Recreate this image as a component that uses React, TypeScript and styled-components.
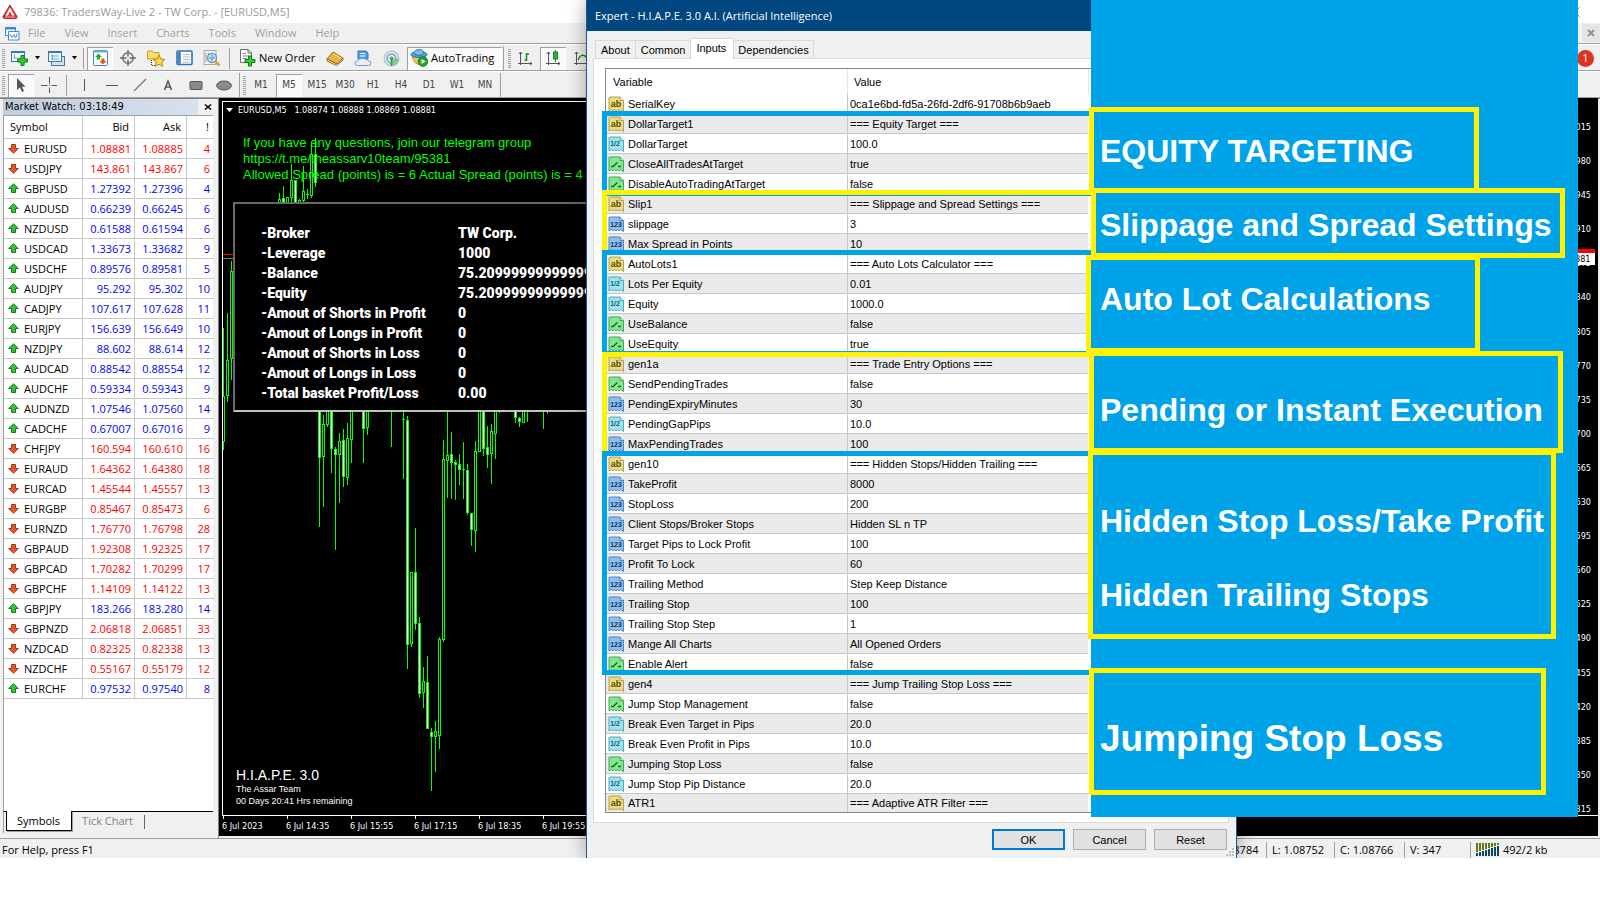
import React from "react";
import styled, { createGlobalStyle, css } from "styled-components";

const UI = `"Open Sans", "Liberation Sans", sans-serif`;
const TAHOMA = `"DejaVu Sans Condensed", "DejaVu Sans", sans-serif`;
const ARIAL = `"Liberation Sans", Arial, sans-serif`;
const HEAVY = `Roboto, "Liberation Sans", sans-serif`;

const SHEET = "#00a2e8";
const MARKER = "#fff200";

const GlobalStyle = createGlobalStyle`
  *, *::before, *::after { box-sizing: border-box; }
  body { margin: 0; background: #fff; overflow-x: hidden; }
  button { font: inherit; color: inherit; background: none; border: 0; padding: 0; margin: 0; }
  svg { display: block; flex: none; }
  table { border-collapse: separate; border-spacing: 0; table-layout: fixed; }
  th, td { padding: 0; font-weight: 400; text-align: left; white-space: nowrap; overflow: hidden; }
`;

const Desktop = styled.div`
  display: grid;
  grid-template-columns: 586px 505px 146px minmax(0, 1fr) 22px;
  align-items: start;
  overflow: hidden;
  font-family: ${UI};
  font-size: 11px;
  line-height: 16px;
  color: #000;
`;

/* ---------- terminal window ---------- */

const Terminal = styled.div`
  grid-area: 1 / 1 / 2 / -1;
  align-self: stretch;
  min-width: 0;
  display: flex;
  flex-direction: column;
  background: #f0f0f0;
`;

const TitleBar = styled.header`
  height: 23px;
  display: flex;
  align-items: center;
  gap: 6px;
  padding: 0 20px 0 2px;
  background: #fff;
  color: #999;
`;

const TitleText = styled.h1`
  margin: 0;
  flex: 1;
  font-size: 11px;
  font-weight: 400;
`;

const MenuBar = styled.nav`
  height: 21px;
  display: flex;
  align-items: center;
  gap: 18px;
  padding-left: 5px;
  border-bottom: 1px solid #a0a0a0;
  color: #a0a0a0;
`;

const MenuButtons = styled.div`
  flex: 1;
  display: flex;
  gap: 19px;
  margin-left: -10px;
`;

const CloseChild = styled.button`
  width: 18px;
  height: 18px;
  display: grid;
  place-items: center;
  background: #e5e5e5;
`;

const ToolRow = styled.div`
  height: 27px;
  display: flex;
  align-items: center;
  padding: 2px 6px 0 0;
  border-bottom: 1px solid #a0a0a0;
  box-shadow: inset 0 1px #fff;
`;

const Grip = styled.span<{ $w: number }>`
  width: ${(p) => p.$w}px;
  height: 19px;
  padding-left: 2px;
  &::before {
    content: "";
    display: block;
    width: 3px;
    height: 19px;
    background: repeating-linear-gradient(#a0a0a0 0 1px, #f0f0f0 1px 2px);
  }
`;

const Divider = styled.span<{ $l?: number; $r?: number; $full?: boolean }>`
  width: 1px;
  height: ${(p) => (p.$full ? 24 : 21)}px;
  margin: 0 ${(p) => p.$r ?? 2}px 0 ${(p) => p.$l ?? 0}px;
  background: #a0a0a0;
`;

const pressedLook = css`
  background: #f9f9f9;
  box-shadow: inset 1px 1px #a0a0a0, inset -1px -1px #fff;
`;

const Tool = styled.button<{ $on?: boolean }>`
  width: 26px;
  height: 23px;
  margin: 0 1px;
  flex: none;
  display: grid;
  place-items: center;
  ${(p) => p.$on && pressedLook}
`;

const DropTool = styled.button`
  width: 37px;
  height: 23px;
  padding-left: 2px;
  flex: none;
  display: flex;
  align-items: center;
  gap: 6px;
`;

const WideTool = styled.button<{ $on?: boolean; $w: number; $pad: number }>`
  width: ${(p) => p.$w}px;
  height: 23px;
  padding-left: ${(p) => p.$pad}px;
  margin-left: ${(p) => (p.$on ? 2 : 0)}px;
  flex: none;
  display: flex;
  align-items: center;
  gap: 3px;
  white-space: nowrap;
  ${(p) => p.$on && pressedLook}
`;

const Period = styled(Tool)`
  font-family: ${TAHOMA};
  font-size: 10px;
  color: #444;
`;

const Notice = styled.button`
  width: 17px;
  height: 17px;
  margin-left: auto;
  border-radius: 50%;
  background: #dc3220;
  color: #fff;
  line-height: 16px;
`;

const Workspace = styled.main`
  flex: 1;
  min-height: 0;
  display: flex;
  padding-right: 2px;
  border-bottom: 1px solid #a0a0a0;
  box-shadow: inset 0 1px #808080;
`;

/* ---------- market watch ---------- */

const Watch = styled.section`
  width: 219px;
  flex: none;
  display: flex;
  flex-direction: column;
  padding: 1px 5px 5px 3px;
  border-right: 1px solid #808080;
`;

const WatchTitle = styled.div`
  height: 16px;
  display: flex;
  align-items: center;
  justify-content: space-between;
  padding: 0 1px 0 2px;
  background: linear-gradient(90deg, #bfcddb, #d7e2ee 93%, #f0f0f0 93%);
  font-family: ${TAHOMA};
`;

const WatchList = styled.div`
  flex: 1;
  border-left: 1px solid #a0a0a0;
  border-top: 1px solid #a0a0a0;
  background: #fff;
`;

const Quotes = styled.table`
  width: 210px;
`;

const QuoteHead = styled.th<{ $num?: boolean }>`
  height: 23px;
  border-bottom: 1px solid #c8c8c8;
  border-right: 1px solid #c8c8c8;
  && { text-align: ${(p) => (p.$num ? "right" : "left")}; }
  padding: 0 5px 0 6px;
  &:last-child { border-right: 0; }
`;

const Quote = styled.td<{ $tone?: string }>`
  height: 20px;
  border-bottom: 1px solid #c8c8c8;
  border-right: 1px solid #c8c8c8;
  padding-right: ${(p) => (p.$tone ? 3 : 0)}px;
  && { text-align: ${(p) => (p.$tone ? "right" : "left")}; }
  color: ${(p) => p.$tone ?? "#000"};
  line-height: 18px;
  &:last-child { border-right: 0; padding-right: 4px; }
`;

const SymbolName = styled.span`
  display: flex;
  align-items: center;
  gap: 5px;
  padding-left: 4px;
`;

const WatchTabs = styled.div`
  height: 22px;
  display: flex;
  align-items: start;
  border-top: 1px solid #000;
  border-left: 1px solid #a0a0a0;
`;

const WatchTab = styled.button<{ $on?: boolean }>`
  height: 20px;
  padding: 0 11px 0 10px;
  margin: -1px 0 0 ${(p) => (p.$on ? 2 : 0)}px;
  color: ${(p) => (p.$on ? "#000" : "#808080")};
  ${(p) =>
    p.$on &&
    css`
      background: #fff;
      border: solid #000;
      border-width: 0 1px 1px;
      box-shadow: 1px 1px #a0a0a0;
    `}
`;

/* ---------- chart ---------- */

const Chart = styled.section`
  flex: 1;
  min-width: 0;
  display: grid;
  grid-template: minmax(0, 1fr) 21px / minmax(0, 1fr) auto;
  padding: 3px 0 0 3px;
  margin-bottom: 2px;
  background: #000;
  color: #fff;
  font-family: ${TAHOMA};
  font-size: 9px;
`;

const Plot = styled.div`
  display: grid;
  min-height: 0;
  border: solid #fff;
  border-width: 1px 0 0 1px;
  & > * { grid-area: 1 / 1; }
`;

const PlotText = styled.div`
  display: flex;
  flex-direction: column;
  min-width: 0;
`;

const ChartTitle = styled.div`
  height: 16px;
  display: flex;
  align-items: center;
  gap: 5px;
  padding-left: 3px;
  white-space: pre;
`;

const Comment = styled.p`
  margin: 17px 0 19px 20px;
  font-family: ${ARIAL};
  font-size: 13px;
  line-height: 16px;
  color: #00ff00;
`;

const AccountPanel = styled.dl`
  width: 380px;
  margin: 0 0 0 10px;
  padding: 19px 0 7px 26px;
  display: grid;
  grid-template-columns: 197px 1fr;
  border: solid #696969;
  border-width: 2px 0 2px 2px;
  border-bottom-color: #c0c0c0;
  background: #000;
  font-family: ${HEAVY};
  font-weight: 900;
  font-size: 14px;
  line-height: 20px;
  dt, dd { margin: 0; white-space: nowrap; }
`;

const Brand = styled.div`
  margin: auto 0 8px 13px;
  font-family: ${ARIAL};
  font-size: 9px;
  line-height: 12px;
  strong { display: block; font-weight: 400; font-size: 14px; line-height: 16px; }
`;

const PriceAxis = styled.ol`
  position: relative;
  margin: 0;
  padding: 20px 7px 0 6px;
  list-style: none;
  display: flex;
  flex-direction: column;
  justify-content: space-between;
  line-height: 12px;
`;

const PriceTag = styled.li<{ $ask?: boolean }>`
  position: absolute;
  right: 3px;
  top: ${(p) => (p.$ask ? 148 : 152)}px;
  width: 42px;
  height: 12px;
  padding: 0 4px;
  background: ${(p) => (p.$ask ? "#f00" : "#fff")};
  color: #000;
`;

const TimeAxis = styled.ol`
  grid-column: 1 / -1;
  margin: 0;
  padding: 0;
  list-style: none;
  display: flex;
  border-top: 1px solid #fff;
`;

const TimeMark = styled.li`
  width: 64px;
  flex: none;
  line-height: 14px;
  white-space: nowrap;
  &::before {
    content: "";
    display: block;
    width: 1px;
    height: 3px;
    margin-left: 1px;
    background: #fff;
  }
`;

/* ---------- status bar ---------- */

const StatusBar = styled.footer`
  height: 19px;
  display: flex;
  align-items: center;
  padding: 2px 0 0 2px;
`;

const StatusGroup = styled.div`
  display: flex;
  margin-left: auto;
`;

const StatusCell = styled.span<{ $w: number }>`
  width: ${(p) => p.$w}px;
  display: flex;
  align-items: center;
  gap: 3px;
  padding-left: 5px;
  border-left: 1px solid #a0a0a0;
  white-space: nowrap;
`;

/* ---------- expert dialog ---------- */

const Dialog = styled.section`
  grid-area: 1 / 2 / 2 / 4;
  z-index: 1;
  display: flex;
  flex-direction: column;
  border-left: 1px solid #1a5a90;
  border-right: 1px solid #1a5a90;
  background: #f0f0f0;
  box-shadow: 0 0 18px rgba(0, 0, 0, 0.35);
  font-family: ${ARIAL};
  clip-path: inset(0 -20px 0 -20px);
`;

const DialogTitle = styled.h2`
  margin: 0;
  height: 31px;
  padding-left: 8px;
  background: #004680;
  color: #fff;
  font-family: ${UI};
  font-size: 11px;
  font-weight: 400;
  line-height: 32px;
`;

const Tabs = styled.div`
  display: flex;
  align-items: flex-end;
  padding: 7px 0 0 8px;
`;

const Tab = styled.button<{ $on?: boolean }>`
  height: ${(p) => (p.$on ? 21 : 18)}px;
  margin: 0 -1px ${(p) => (p.$on ? -1 : 0)}px 0;
  position: relative;
  border: 1px solid #d9d9d9;
  border-bottom: 0;
  background: ${(p) => (p.$on ? "#fff" : "#f0f0f0")};
  padding: 0 ${(p) => (p.$on ? "7px 2px 5px" : "5px")};
  z-index: ${(p) => (p.$on ? 1 : 0)};
  &:last-child { padding: 0 4px; }
`;

const TabPage = styled.div`
  margin: 0 7px 0 6px;
  padding: 9px 9px 9px 11px;
  border: 1px solid #d9d9d9;
  background: #fff;
`;

const ListView = styled.div`
  position: relative;
  border: 1px solid #828790;
`;

const Params = styled.table`
  width: 483px;
`;

const ParamHead = styled.th`
  height: 25px;
  padding-left: 7px;
  border-right: 1px solid #e5e5e5;
  & + & { padding-left: 6px; }
`;

const Param = styled.td`
  height: 20px;
  line-height: 18px;
  padding: 1px 0 0 2px;
  border-bottom: 1px solid #c8c8c8;
  border-right: 1px solid #c8c8c8;
  &:last-child { border-right-color: #fff; }
`;

const ParamRow = styled.tr`
  &:nth-child(even) { background: #eaeaea; }
  &:last-child ${Param} { height: 18px; line-height: 17px; border-bottom: 0; }
`;

const ParamName = styled.span`
  display: flex;
  align-items: center;
  gap: 3px;
`;

const Frames = styled.div`
  position: absolute;
  top: 42px;
  left: -4px;
  width: 496px;
  pointer-events: none;
`;

const Frame = styled.div<{ $h: number; $lap: number; $color: string }>`
  height: ${(p) => p.$h}px;
  margin-top: ${(p) => -p.$lap}px;
  border: 5px solid ${(p) => p.$color};
  position: relative;
`;

const Actions = styled.div`
  display: flex;
  justify-content: flex-end;
  gap: 8px;
  padding: 6px 9px 8px;
`;

const Action = styled.button<{ $primary?: boolean }>`
  width: 73px;
  height: 21px;
  background: #e1e1e1;
  border: ${(p) => (p.$primary ? "2px solid #0078d7" : "1px solid #adadad")};
`;

const ResizeGrip = styled.svg`
  position: absolute;
  right: 2px;
  bottom: 2px;
`;

const ActionBar = styled.div`
  position: relative;
`;

/* ---------- callouts ---------- */

const Sheet = styled.aside`
  grid-area: 1 / 3 / 2 / 5;
  z-index: 2;
  min-height: 817px;
  padding: 107px 0 22px;
  background: ${SHEET};
  font-family: ${ARIAL};
  font-weight: 700;
  font-size: 32px;
  line-height: 37px;
  color: #fff;
`;

const Callout = styled.div<{ $w: number; $h: number; $gap: number; $pad: number; $out?: number }>`
  position: relative;
  width: ${(p) => p.$w}px;
  height: ${(p) => p.$h}px;
  margin: ${(p) => p.$gap}px 0 0 -${(p) => p.$out ?? 2}px;
  padding: ${(p) => p.$pad}px 0 0 ${(p) => 4 + (p.$out ?? 2)}px;
  border: 5px solid ${MARKER};
  white-space: nowrap;
`;

const CalloutText = styled.p<{ $big?: boolean }>`
  margin: 0 0 37px;
  font-size: ${(p) => (p.$big ? 37 : 32)}px;
  line-height: ${(p) => (p.$big ? 43 : 37)}px;
`;

/* ---------- data ---------- */

const quotes: [string, string, string, number, 0 | 1][] = [
  ["EURUSD", "1.08881", "1.08885", 4, 0],
  ["USDJPY", "143.861", "143.867", 6, 0],
  ["GBPUSD", "1.27392", "1.27396", 4, 1],
  ["AUDUSD", "0.66239", "0.66245", 6, 1],
  ["NZDUSD", "0.61588", "0.61594", 6, 1],
  ["USDCAD", "1.33673", "1.33682", 9, 1],
  ["USDCHF", "0.89576", "0.89581", 5, 1],
  ["AUDJPY", "95.292", "95.302", 10, 1],
  ["CADJPY", "107.617", "107.628", 11, 1],
  ["EURJPY", "156.639", "156.649", 10, 1],
  ["NZDJPY", "88.602", "88.614", 12, 1],
  ["AUDCAD", "0.88542", "0.88554", 12, 1],
  ["AUDCHF", "0.59334", "0.59343", 9, 1],
  ["AUDNZD", "1.07546", "1.07560", 14, 1],
  ["CADCHF", "0.67007", "0.67016", 9, 1],
  ["CHFJPY", "160.594", "160.610", 16, 0],
  ["EURAUD", "1.64362", "1.64380", 18, 0],
  ["EURCAD", "1.45544", "1.45557", 13, 0],
  ["EURGBP", "0.85467", "0.85473", 6, 0],
  ["EURNZD", "1.76770", "1.76798", 28, 0],
  ["GBPAUD", "1.92308", "1.92325", 17, 0],
  ["GBPCAD", "1.70282", "1.70299", 17, 0],
  ["GBPCHF", "1.14109", "1.14122", 13, 0],
  ["GBPJPY", "183.266", "183.280", 14, 1],
  ["GBPNZD", "2.06818", "2.06851", 33, 0],
  ["NZDCAD", "0.82325", "0.82338", 13, 0],
  ["NZDCHF", "0.55167", "0.55179", 12, 0],
  ["EURCHF", "0.97532", "0.97540", 8, 1],
];

type Kind = "s" | "d" | "b" | "i";

const params: [Kind, string, string][] = [
  ["s", "SerialKey", "0ca1e6bd-fd5a-26fd-2df6-91708b6b9aeb"],
  ["s", "DollarTarget1", "=== Equity Target ==="],
  ["d", "DollarTarget", "100.0"],
  ["b", "CloseAllTradesAtTarget", "true"],
  ["b", "DisableAutoTradingAtTarget", "false"],
  ["s", "Slip1", "=== Slippage and Spread Settings ==="],
  ["i", "slippage", "3"],
  ["i", "Max Spread in Points", "10"],
  ["s", "AutoLots1", "=== Auto Lots Calculator ==="],
  ["d", "Lots Per Equity", "0.01"],
  ["d", "Equity", "1000.0"],
  ["b", "UseBalance", "false"],
  ["b", "UseEquity", "true"],
  ["s", "gen1a", "=== Trade Entry Options ==="],
  ["b", "SendPendingTrades", "false"],
  ["i", "PendingExpiryMinutes", "30"],
  ["d", "PendingGapPips", "10.0"],
  ["i", "MaxPendingTrades", "100"],
  ["s", "gen10", "=== Hidden Stops/Hidden Trailing ==="],
  ["i", "TakeProfit", "8000"],
  ["i", "StopLoss", "200"],
  ["i", "Client Stops/Broker Stops", "Hidden SL n TP"],
  ["i", "Target Pips to Lock Profit", "100"],
  ["i", "Profit To Lock", "60"],
  ["i", "Trailing Method", "Step Keep Distance"],
  ["i", "Trailing Stop", "100"],
  ["i", "Trailing Stop Step", "1"],
  ["i", "Mange All Charts", "All Opened Orders"],
  ["b", "Enable Alert", "false"],
  ["s", "gen4", "=== Jump Trailing Stop Loss ==="],
  ["b", "Jump Stop Management", "false"],
  ["d", "Break Even Target in Pips", "20.0"],
  ["d", "Break Even Profit in Pips", "10.0"],
  ["b", "Jumping Stop Loss", "false"],
  ["d", "Jump Stop Pip Distance", "20.0"],
  ["s", "ATR1", "=== Adaptive ATR Filter ==="],
];

const account: [string, string][] = [
  ["-Broker", "TW Corp."],
  ["-Leverage", "1000"],
  ["-Balance", "75.20999999999999"],
  ["-Equity", "75.20999999999999"],
  ["-Amout of Shorts in Profit", "0"],
  ["-Amout of Longs in Profit", "0"],
  ["-Amout of Shorts in Loss", "0"],
  ["-Amout of Longs in Loss", "0"],
  ["-Total basket Profit/Loss", "0.00"],
];

/* x, high, low, body top, body bottom, 1 for a falling (filled) candle */
const candles: number[][] = [
  [223, 328, 450, 396, 442, 0], [227, 313, 402, 360, 396, 0], [231, 261, 380, 271, 359, 0],
  [279, 193, 210, 199, 210, 0], [283, 186, 210, 198, 210, 1], [287, 197, 210, 197, 210, 0],
  [291, 164, 202, 180, 198, 0], [295, 180, 210, 180, 210, 1], [299, 199, 210, 200, 210, 0],
  [303, 166, 202, 191, 201, 0], [307, 189, 199, 194, 195, 0], [311, 142, 198, 154, 196, 0],
  [315, 138, 187, 154, 183, 1], [319, 400, 527, 400, 458, 1], [323, 415, 507, 424, 457, 0],
  [327, 400, 427, 400, 425, 0], [331, 400, 473, 400, 449, 1], [335, 447, 550, 449, 455, 1],
  [339, 433, 503, 441, 455, 0], [343, 429, 487, 440, 477, 1], [347, 423, 485, 438, 478, 0],
  [351, 400, 463, 400, 440, 0], [363, 400, 463, 400, 429, 1], [367, 400, 435, 400, 428, 0],
  [391, 400, 447, 405, 406, 0], [403, 400, 479, 419, 420, 0], [407, 416, 669, 420, 645, 1],
  [411, 572, 647, 572, 644, 0], [415, 528, 630, 572, 624, 1], [419, 617, 698, 623, 694, 1],
  [423, 667, 708, 681, 693, 0], [427, 656, 729, 682, 729, 1], [431, 728, 791, 732, 737, 1],
  [435, 721, 772, 731, 737, 0], [439, 637, 749, 639, 736, 0], [443, 440, 642, 459, 640, 0],
  [447, 400, 498, 455, 461, 0], [451, 432, 499, 454, 463, 1], [455, 460, 500, 462, 465, 1],
  [459, 454, 485, 464, 470, 1], [463, 442, 499, 469, 470, 0], [467, 464, 515, 470, 513, 1],
  [471, 513, 546, 513, 530, 1], [475, 441, 552, 451, 531, 0], [479, 400, 452, 400, 452, 0],
  [483, 400, 456, 400, 449, 1], [487, 426, 468, 447, 455, 1], [491, 424, 484, 431, 454, 0],
  [495, 400, 459, 400, 434, 0], [499, 400, 413, 400, 401, 0], [515, 400, 423, 400, 418, 1],
  [519, 417, 427, 418, 422, 1], [523, 400, 423, 400, 423, 0], [527, 400, 422, 400, 401, 0],
  [543, 400, 429, 400, 401, 0], [547, 400, 414, 400, 401, 0],
];

const prices = Array.from({ length: 21 }, (_, i) => ((109015 - i * 35) / 100000).toFixed(5));
const times = ["6 Jul 2023", "6 Jul 14:35", "6 Jul 15:55", "6 Jul 17:15", "6 Jul 18:35", "6 Jul 19:55"];
const menus = ["File", "View", "Insert", "Charts", "Tools", "Window", "Help"];
const periods = ["M1", "M5", "M15", "M30", "H1", "H4", "D1", "W1", "MN"];

/* ---------- icons ---------- */

const Logo = () => (
  <svg width="16" height="16" viewBox="0 0 16 16">
    <path d="M8 1 L15 12.5 Q15.5 14.5 13.5 14.5 H2.500 Q.5 14.500 1 12.500 Z" fill="#d8343c" stroke="#c2262e" strokeLinejoin="round" />
    <path d="M8 3.500 L12.500 11.500 H10 L8 7.500 L6 11.500 H3.500 Z" fill="#fff" />
    <path d="M3 13 H13" stroke="#f3a6a8" strokeWidth="1" />
  </svg>
);

const DocIcon = () => (
  <svg width="15" height="15" viewBox="0 0 15 15" fill="#fff" stroke="#3d86d8">
    <path d="M.5 1.500 H10.500 V9.500 H.5Z" />
    <path d="M.5 2.500 H10.500" strokeWidth="2" />
    <path d="M3.500 5.500 H14 V14 H3.500Z" />
    <path d="M5 8 L7 11.500 L9 8.500 L10.500 12 L12.500 7.500" fill="none" />
  </svg>
);

const Caret = () => (
  <svg width="5" height="4" viewBox="0 0 5 4"><path d="M0 0 H5 L2.500 3.500Z" fill="#000" /></svg>
);

const Plus = ({ x, y }: { x: number; y: number }) => (
  <path
    transform={`translate(${x} ${y})`}
    d="M4 .5 H7 V4 H10.500 V7 H7 V10.500 H4 V7 H.5 V4 H4Z"
    fill="#2fd02f" stroke="#0a7d14" strokeWidth="1"
  />
);

const NewChartIcon = () => (
  <svg width="18" height="17" viewBox="0 0 18 17">
    <rect x=".5" y="1.500" width="13" height="10" fill="#f4faff" stroke="#3b78ad" />
    <path d="M1 2 H13" stroke="#3b78ad" strokeWidth="2" />
    <path d="M3.500 4 V9 M2.500 8 H9" stroke="#7ba4c8" fill="none" />
    <Plus x={6} y={5} />
  </svg>
);

const ProfilesIcon = () => (
  <svg width="18" height="17" viewBox="0 0 18 17">
    <rect x="3.500" y="6.500" width="13" height="9" fill="#cfe3f5" stroke="#3b78ad" />
    <rect x=".5" y="1.500" width="13" height="10" fill="#eef6fd" stroke="#3b78ad" />
    <path d="M1 2 H13" stroke="#3b78ad" strokeWidth="2" />
    <path d="M3 6 H11 M3 9 H11 M4.500 4.500 V10" stroke="#7ba4c8" />
  </svg>
);

const WatchIcon = () => (
  <svg width="17" height="17" viewBox="0 0 17 17">
    <rect x="1.500" y=".5" width="14" height="15" rx="1" fill="#fff" stroke="#3b86c4" />
    <path d="M2 1.500 H15" stroke="#6fb0e4" strokeWidth="2" />
    <path d="M6.500 3.500 L10 7 H8 V9.500 H5 V7 H3Z" fill="#1fae2b" />
    <path d="M11 14.500 L7.500 11 H9.500 V8.500 H12.500 V11 H14.500Z" fill="#e8541c" />
  </svg>
);

const TargetIcon = () => (
  <svg width="16" height="16" viewBox="0 0 16 16" fill="none" stroke="#6a6a6a" strokeWidth="1.400">
    <circle cx="8" cy="8" r="5.200" />
    <path d="M8 0 V6.500 M8 9.500 V16 M0 8 H6.500 M9.500 8 H16" />
  </svg>
);

const NavigatorIcon = () => (
  <svg width="18" height="17" viewBox="0 0 18 17">
    <path d="M.5 2 Q.5 1 1.500 1 H5 L6.500 2.500 H12 V9 H.5Z" fill="#f6dc6a" stroke="#c9a227" />
    <path d="M4.500 10 V15.500 H9" stroke="#333" strokeDasharray="1 1" fill="none" />
    <path d="M12 5 L13.800 9 L17.800 9.400 L14.800 12.200 L15.700 16.300 L12 14.200 L8.300 16.300 L9.200 12.200 L6.200 9.400 L10.200 9Z" fill="#ffd84a" stroke="#b9861a" />
  </svg>
);

const DataIcon = () => (
  <svg width="17" height="16" viewBox="0 0 17 16">
    <rect x="1" y="1" width="15" height="13.500" rx="1" fill="#fff" stroke="#2f73b3" strokeWidth="1.600" />
    <rect x="1.800" y="1.800" width="3" height="12" fill="#3f85c4" />
    <path d="M7 4.500 H14 M7 7 H14 M7 9.500 H14 M7 12 H14" stroke="#a9bfd4" />
  </svg>
);

const TesterIcon = () => (
  <svg width="18" height="17" viewBox="0 0 18 17">
    <rect x="1" y=".5" width="12" height="14" fill="#f2f2f2" stroke="#a8a8a8" />
    <path d="M3 3 V12 M5.500 3 V11" stroke="#999" />
    <circle cx="9" cy="8" r="4.500" fill="#cfe8fb" fillOpacity=".85" stroke="#5f9bcb" strokeWidth="1.300" />
    <path d="M9 5 V11 M7 7 V9 M11 6.500 V9" stroke="#3f7fb5" />
    <path d="M12.500 11.500 L16.500 15.500" stroke="#e0a12c" strokeWidth="2.600" />
  </svg>
);

const OrderIcon = () => (
  <svg width="17" height="18" viewBox="0 0 17 18">
    <path d="M1.500 .5 H9 L12.500 4 V13.500 H1.500Z" fill="#fff" stroke="#6b6b6b" />
    <path d="M9 .5 V4 H12.500" fill="none" stroke="#6b6b6b" />
    <path d="M3.500 4.500 H7 M3.500 7 H10 M3.500 9.500 H8" stroke="#8a8a8a" />
    <Plus x={5.500} y={6.500} />
  </svg>
);

const BookIcon = () => (
  <svg width="18" height="16" viewBox="0 0 18 16">
    <path d="M1 9 L7 2 L17 8 L11 14Z" fill="#e9b44a" stroke="#9c6a14" strokeLinejoin="round" />
    <path d="M1 9 L1 11 L10.500 15.500 L17 10 V8 L11 14Z" fill="#fbe7b0" stroke="#9c6a14" strokeLinejoin="round" />
    <path d="M7 3.500 L15 8" stroke="#ffe28a" />
  </svg>
);

const HostIcon = () => (
  <svg width="18" height="17" viewBox="0 0 18 17">
    <path d="M4 1 H12 L14 3 V9 H4Z" fill="#4ba3e3" stroke="#2674b5" />
    <path d="M6 3.500 H11 M6 6 H11" stroke="#fff" />
    <path d="M3.500 15.500 Q.8 15.500 1 13 Q1.200 11 3.500 11 Q4.500 8 8 8.500 Q10 7.500 12 9.500 Q14 9 14.500 11 Q17 11 17 13.300 Q17 15.500 14.500 15.500Z" fill="#e6eef8" stroke="#7d97b8" />
  </svg>
);

const SignalIcon = () => (
  <svg width="17" height="17" viewBox="0 0 17 17" fill="none">
    <circle cx="8.500" cy="8.500" r="7.200" stroke="#b4c6dc" strokeWidth="1.600" />
    <circle cx="8.500" cy="8.500" r="4.400" stroke="#7da5cc" strokeWidth="1.600" />
    <path d="M8.500 8.500 L9.500 16 A7.500 7.500 0 0 0 16 8.500Z" fill="#7cc47c" fillOpacity=".8" />
    <circle cx="8.500" cy="8.500" r="2" fill="#4caf50" />
    <path d="M8.500 9 V16" stroke="#3e9a42" strokeWidth="1.600" />
  </svg>
);

const AutoIcon = () => (
  <svg width="18" height="18" viewBox="0 0 18 18">
    <path d="M2 8 L16 8 L12 14.500 Q8 17 5 13.500Z" fill="#f3c846" stroke="#bd9120" />
    <ellipse cx="9" cy="5.500" rx="8" ry="3" fill="#4f9fd6" stroke="#2b76ab" />
    <ellipse cx="9" cy="3.500" rx="4.500" ry="2.800" fill="#7cc0ea" stroke="#2b76ab" />
    <circle cx="13" cy="12.500" r="4.800" fill="#21a82d" stroke="#11801b" />
    <path d="M11.500 10 L15.500 12.500 L11.500 15Z" fill="#fff" />
  </svg>
);

const Axes = () => <path d="M2.500 2 V15 M0 13.500 H14 M.8 4 L2.500 2 L4.200 4 M12 12 L14 13.500 L12 15" stroke="#555" fill="none" />;
const BarsIcon = () => (
  <svg width="15" height="16" viewBox="0 0 15 16"><Axes /><path d="M8.500 3 V11 M6.500 10 H8.500 M8.500 4 H11" stroke="#178a2a" strokeWidth="1.500" fill="none" /></svg>
);
const CandleIcon = () => (
  <svg width="15" height="16" viewBox="0 0 15 16"><Axes /><path d="M9.500 0 V12" stroke="#178a2a" /><rect x="7.500" y="2" width="4" height="7" fill="#21b838" stroke="#178a2a" /></svg>
);
const LineIcon = () => (
  <svg width="15" height="16" viewBox="0 0 15 16"><Axes /><path d="M4 10 Q8 1 14 9" stroke="#178a2a" strokeWidth="1.300" fill="none" /></svg>
);

const drawTools: { name: string; art: React.ReactNode }[] = [
  { name: "Vertical line", art: <path d="M8.500 2 V14" stroke="#555" /> },
  { name: "Horizontal line", art: <path d="M2 8.500 H14" stroke="#555" /> },
  { name: "Trendline", art: <path d="M2 14 L14 2" stroke="#777" strokeWidth="1.300" /> },
  { name: "Text", art: <path d="M4.500 13 L8 4 L11.500 13 M6 10 H10" stroke="#555" strokeWidth="1.500" fill="none" /> },
  { name: "Rectangle", art: <rect x="2" y="4.500" width="12" height="8" rx="1" fill="#8a8a8a" stroke="#555" /> },
  { name: "Ellipse", art: <ellipse cx="8" cy="8.500" rx="7.400" ry="4.500" fill="#8a8a8a" stroke="#555" /> },
];

const Arrow = ({ up }: { up: boolean }) => (
  <svg width="11" height="11" viewBox="0 0 11 11">
    {up ? (
      <path d="M5.500 .8 L10.300 5.500 H7.500 V9.500 H3.500 V5.500 H.7Z" fill="#35c43a" stroke="#12781a" strokeLinejoin="round" />
    ) : (
      <path d="M5.500 10.200 L10.300 5.500 H7.500 V1.500 H3.500 V5.500 H.7Z" fill="#e8582c" stroke="#a33410" strokeLinejoin="round" />
    )}
  </svg>
);

const kinds: Record<Kind, { fill: string; line: string; ink: string; label: string }> = {
  s: { fill: "#e9dc84", line: "#b5a24a", ink: "#5a4a00", label: "ab" },
  d: { fill: "#9fe3ee", line: "#4fa9bd", ink: "#0f5f78", label: "1/2" },
  b: { fill: "#86e592", line: "#3fa852", ink: "#0d6a1c", label: "" },
  i: { fill: "#8fc0ee", line: "#4d83bf", ink: "#0b2f66", label: "123" },
};

const KindIcon = ({ kind }: { kind: Kind }) => {
  const k = kinds[kind];
  return (
    <svg width="17" height="17" viewBox="0 0 17 17">
      <path
        d="M1.500 1 H12 L15.500 4.500 V15.500 L14 14.500 L12.500 13.500 L11 15 L9.500 13.500 L8 15 L6.500 13.500 L5 15 L3.500 13.500 L1 15 V1.500Z"
        fill={k.fill} stroke={k.line} strokeLinejoin="round"
      />
      <path d="M12 1 V4.500 H15.500" fill="#fff" fillOpacity=".6" stroke={k.line} />
      {kind === "b" ? (
        <path d="M3 10.500 H5 L9.500 6.500 M10 10.500 H13" stroke={k.ink} strokeWidth="1.400" fill="none" />
      ) : (
        <text
          x={kind === "d" ? 7 : 8} y={kind === "d" ? 10 : 11} textAnchor="middle" fill={k.ink}
          fontFamily="Liberation Sans" fontWeight="700" fontSize={kind === "s" ? 9 : 7}
        >
          {k.label}
        </text>
      )}
    </svg>
  );
};

const TrafficIcon = () => (
  <svg width="24" height="13" viewBox="0 0 24 13">
    {[0, 1, 2, 3, 4, 5, 6, 7].map((i) => (
      <g key={i}>
        <rect x={i * 3} y="0" width="2" height={9 - i} fill="#5d7a12" />
        <rect x={i * 3} y={10 - i} width="2" height={3 + i} fill="#0d4363" />
      </g>
    ))}
  </svg>
);

const CandleChart = () => (
  <svg width="364" height="713" viewBox="223 102 364 713" shapeRendering="crispEdges">
    <path d="M223 254.500 H587" stroke="#f00" />
    <path d="M223 258.500 H587" stroke="#708090" />
    {candles.map(([x, high, low, top, bottom, falling]) => (
      <g key={x} fill="#00ff00">
        <rect x={x} y={high} width="1" height={low - high} />
        <rect x={x - 1} y={top} width="3" height={bottom - top} />
        {bottom - top > 2 && (
          <rect x={x} y={top + 1} width="1" height={bottom - top - 2} fill={falling ? "#fff" : "#000"} />
        )}
      </g>
    ))}
  </svg>
);

/* ---------- page ---------- */

const MarketWatch = () => (
  <Watch>
    <WatchTitle>
      <span>Market Watch: 03:18:49</span>
      <button aria-label="Close Market Watch">
        <svg width="8" height="8" viewBox="0 0 8 8"><path d="M1 1.500 L7 6.500 M7 1.500 L1 6.500" stroke="#000" strokeWidth="1.600" /></svg>
      </button>
    </WatchTitle>
    <WatchList>
      <Quotes>
        <colgroup>
          <col width="79" /><col width="52" /><col width="52" /><col width="27" />
        </colgroup>
        <thead>
          <tr>
            <QuoteHead>Symbol</QuoteHead>
            <QuoteHead $num>Bid</QuoteHead>
            <QuoteHead $num>Ask</QuoteHead>
            <QuoteHead $num>!</QuoteHead>
          </tr>
        </thead>
        <tbody>
          {quotes.map(([name, bid, ask, spread, up]) => {
            const tone = up ? "#0000ff" : "#ff0000";
            return (
              <tr key={name}>
                <Quote><SymbolName><Arrow up={!!up} />{name}</SymbolName></Quote>
                <Quote $tone={tone}>{bid}</Quote>
                <Quote $tone={tone}>{ask}</Quote>
                <Quote $tone={tone}>{spread}</Quote>
              </tr>
            );
          })}
        </tbody>
      </Quotes>
    </WatchList>
    <WatchTabs>
      <WatchTab $on>Symbols</WatchTab>
      <WatchTab>Tick Chart</WatchTab>
      <svg width="1" height="18" viewBox="0 0 1 18"><path d="M.5 3 V17" stroke="#666" /></svg>
    </WatchTabs>
  </Watch>
);

const ChartWindow = () => (
  <Chart>
    <Plot>
      <CandleChart />
      <PlotText>
        <ChartTitle>
          <svg width="7" height="4" viewBox="0 0 7 4"><path d="M0 0 H7 L3.500 4Z" fill="#fff" /></svg>
          {"EURUSD,M5   1.08874 1.08888 1.08869 1.08881"}
        </ChartTitle>
        <Comment>
          If you have any questions, join our telegram group<br />
          https://t.me/theassarv10team/95381<br />
          Allowed Spread (points) is = 6 Actual Spread (points) is = 4
        </Comment>
        <AccountPanel>
          {account.map(([name, value]) => (
            <React.Fragment key={name}>
              <dt>{name}</dt>
              <dd>{value}</dd>
            </React.Fragment>
          ))}
        </AccountPanel>
        <Brand>
          <strong>H.I.A.P.E. 3.0</strong>
          The Assar Team<br />
          00 Days 20:41 Hrs remaining
        </Brand>
      </PlotText>
    </Plot>
    <PriceAxis>
      {prices.map((p) => <li key={p}>{p}</li>)}
      <PriceTag $ask aria-label="Ask" />
      <PriceTag>1.08881</PriceTag>
    </PriceAxis>
    <TimeAxis>
      {times.map((t) => <TimeMark key={t}>{t}</TimeMark>)}
    </TimeAxis>
  </Chart>
);

const ExpertDialog = () => (
  <Dialog role="dialog" aria-label="Expert properties">
    <DialogTitle>Expert - H.I.A.P.E. 3.0 A.I. (Artificial Intelligence)</DialogTitle>
    <Tabs>
      <Tab>About</Tab>
      <Tab>Common</Tab>
      <Tab $on>Inputs</Tab>
      <Tab>Dependencies</Tab>
    </Tabs>
    <TabPage>
      <ListView>
        <Params>
          <colgroup><col width="242" /><col width="241" /></colgroup>
          <thead>
            <tr><ParamHead>Variable</ParamHead><ParamHead>Value</ParamHead></tr>
          </thead>
          <tbody>
            {params.map(([kind, name, value]) => (
              <ParamRow key={name}>
                <Param><ParamName><KindIcon kind={kind} />{name}</ParamName></Param>
                <Param>{value}</Param>
              </ParamRow>
            ))}
          </tbody>
        </Params>
        <Frames>
          <Frame $h={85} $lap={0} $color={SHEET} />
          <Frame $h={65} $lap={6} $color={MARKER} />
          <Frame $h={106} $lap={5} $color={SHEET} />
          <Frame $h={104} $lap={4} $color={MARKER} />
          <Frame $h={224} $lap={5} $color={SHEET} />
        </Frames>
      </ListView>
    </TabPage>
    <ActionBar>
      <Actions>
        <Action $primary>OK</Action>
        <Action>Cancel</Action>
        <Action>Reset</Action>
      </Actions>
      <ResizeGrip width="8" height="8" viewBox="0 0 8 8" fill="#bfbfbf">
        <path d="M6 0h2v2h-2z M3 3h2v2h-2z M6 3h2v2h-2z M0 6h2v2h-2z M3 6h2v2h-2z M6 6h2v2h-2z" />
      </ResizeGrip>
    </ActionBar>
  </Dialog>
);

export default function App() {
  return (
    <>
      <GlobalStyle />
      <Desktop>
        <Terminal>
          <TitleBar>
            <Logo />
            <TitleText>79836: TradersWay-Live 2 - TW Corp. - [EURUSD,M5]</TitleText>
            <svg width="10" height="10" viewBox="0 0 10 10"><path d="M0 0 L10 10 M10 0 L0 10" stroke="#999" /></svg>
          </TitleBar>
          <MenuBar>
            <DocIcon />
            <MenuButtons>
              {menus.map((m) => <button key={m}>{m}</button>)}
            </MenuButtons>
            <CloseChild aria-label="Close chart">
              <svg width="8" height="8" viewBox="0 0 8 8"><path d="M1 1 L7 7 M7 1 L1 7" stroke="#8595a8" strokeWidth="2" /></svg>
            </CloseChild>
          </MenuBar>
          <ToolRow>
            <Grip $w={9} />
            <DropTool aria-label="New chart"><NewChartIcon /><Caret /></DropTool>
            <DropTool aria-label="Profiles"><ProfilesIcon /><Caret /></DropTool>
            <Divider />
            <Tool $on aria-label="Market Watch"><WatchIcon /></Tool>
            <Tool aria-label="Data Window"><TargetIcon /></Tool>
            <Tool aria-label="Navigator"><NavigatorIcon /></Tool>
            <Tool aria-label="Terminal"><DataIcon /></Tool>
            <Tool aria-label="Strategy Tester"><TesterIcon /></Tool>
            <Divider $l={3} $r={3} />
            <WideTool $w={88} $pad={6}><OrderIcon />New Order</WideTool>
            <Tool aria-label="MetaEditor"><BookIcon /></Tool>
            <Tool aria-label="Virtual hosting"><HostIcon /></Tool>
            <Tool aria-label="Signals"><SignalIcon /></Tool>
            <WideTool $on $w={95} $pad={3}><AutoIcon />AutoTrading</WideTool>
            <Divider $l={1} $full />
            <Grip $w={5} />
            <Tool aria-label="Bar chart"><BarsIcon /></Tool>
            <Tool $on aria-label="Candlesticks"><CandleIcon /></Tool>
            <Tool aria-label="Line chart"><LineIcon /></Tool>
            <Notice>1</Notice>
          </ToolRow>
          <ToolRow>
            <Grip $w={7} />
            <Tool $on aria-label="Cursor">
              <svg width="16" height="16" viewBox="0 0 16 16"><path d="M4 1 V13 L7 10.500 L9 15 L11 14 L9 9.800 H12.500Z" fill="#555" /></svg>
            </Tool>
            <Tool aria-label="Crosshair">
              <svg width="16" height="16" viewBox="0 0 16 16"><path d="M8.500 0 V6.500 M8.500 10.500 V16 M0 8.500 H6.500 M10.500 8.500 H16 M8 8.500 H9" stroke="#555" /></svg>
            </Tool>
            <Divider $l={3} $r={3} />
            {drawTools.map((t) => (
              <Tool key={t.name} aria-label={t.name}>
                <svg width="16" height="16" viewBox="0 0 16 16">{t.art}</svg>
              </Tool>
            ))}
            <Divider $l={1} $r={1} $full />
            <Grip $w={6} />
            {periods.map((p) => <Period key={p} $on={p === "M5"}>{p}</Period>)}
            <Divider $l={1} $full />
          </ToolRow>
          <Workspace>
            <MarketWatch />
            <ChartWindow />
          </Workspace>
          <StatusBar>
            <span>For Help, press F1</span>
            <StatusGroup>
              <StatusCell $w={68}>H: 1.08784</StatusCell>
              <StatusCell $w={68}>L: 1.08752</StatusCell>
              <StatusCell $w={70}>C: 1.08766</StatusCell>
              <StatusCell $w={66}>V: 347</StatusCell>
              <StatusCell $w={130}><TrafficIcon />492/2 kb</StatusCell>
            </StatusGroup>
          </StatusBar>
        </Terminal>
        <ExpertDialog />
        <Sheet>
          <Callout $w={390} $h={86} $gap={0} $pad={21}>
            <CalloutText>EQUITY TARGETING</CalloutText>
          </Callout>
          <Callout $w={474} $h={70} $gap={-5} $pad={14} $out={0}>
            <CalloutText>Slippage and Spread Settings</CalloutText>
          </Callout>
          <Callout $w={394} $h={98} $gap={-3} $pad={21} $out={5}>
            <CalloutText>Auto Lot Calculations</CalloutText>
          </Callout>
          <Callout $w={474} $h={102} $gap={-2} $pad={36}>
            <CalloutText>Pending or Instant Execution</CalloutText>
          </Callout>
          <Callout $w={468} $h={189} $gap={-3} $pad={48} $out={3}>
            <CalloutText>Hidden Stop Loss/Take Profit</CalloutText>
            <CalloutText>Hidden Trailing Stops</CalloutText>
          </Callout>
          <Callout $w={457} $h={127} $gap={29} $pad={44}>
            <CalloutText $big>Jumping Stop Loss</CalloutText>
          </Callout>
        </Sheet>
      </Desktop>
    </>
  );
}
